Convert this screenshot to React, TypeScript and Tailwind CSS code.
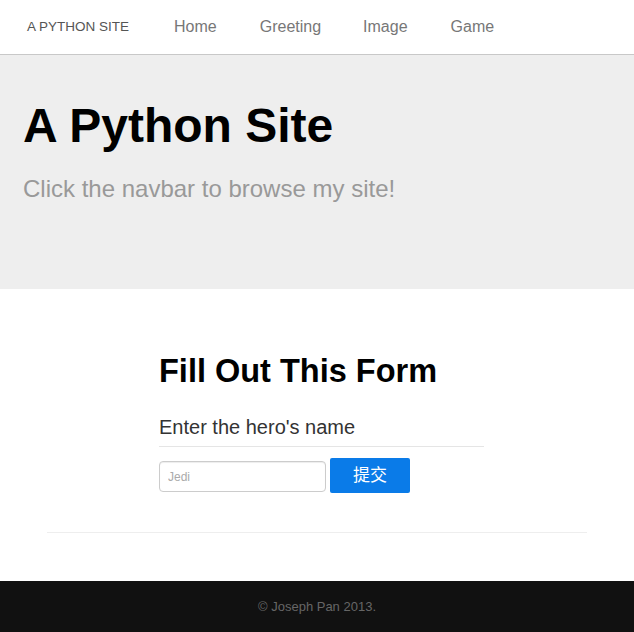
import { useState } from 'react';

const navLinks = [
  { label: 'Home', gap: 'ml-[45px]' },
  { label: 'Greeting', gap: 'ml-[43px]' },
  { label: 'Image', gap: 'ml-[42px]' },
  { label: 'Game', gap: 'ml-[43px]' },
];

export default function App() {
  const [name, setName] = useState('');

  return (
    <div className="min-h-[632px] bg-white font-['Liberation_Sans','Noto_Sans_CJK_SC',sans-serif]">
      {/* Navbar */}
      <nav className="h-[55px] border-b border-[#c8c8c8] flex items-center">
        <a className="ml-[27px] text-[13.5px] text-[#555]">A PYTHON SITE</a>
        <ul className="flex items-center">
          {navLinks.map((link) => (
            <li key={link.label} className={`${link.gap} text-[16px] text-[#777]`}>
              {link.label}
            </li>
          ))}
        </ul>
      </nav>

      {/* Hero */}
      <header className="h-[234px] bg-[#eeeeee] pl-[23px] pt-[44px]">
        <h1 className="text-[48px] leading-[53px] font-bold text-black">A Python Site</h1>
        <p className="mt-[19px] text-[24px] leading-[36px] text-[#999]">
          Click the navbar to browse my site!
        </p>
      </header>

      {/* Form */}
      <main className="pt-[65px] pb-[48px]">
        <div className="ml-[159px] w-[325px]">
          <h2 className="text-[32.5px] leading-[35px] font-bold text-black">Fill Out This Form</h2>
          <form onSubmit={(e) => e.preventDefault()}>
            <div className="mt-[23px] pb-[4px] border-b border-[#e5e5e5] text-[20px] leading-[30px] text-[#333]">
              Enter the hero's name
            </div>
            <div className="mt-[11px] flex items-center">
              <input
                value={name}
                onChange={(e) => setName(e.target.value)}
                placeholder="Jedi"
                className="mt-[2px] w-[167px] h-[31px] border border-[#ccc] rounded-[4px] px-[8px] text-[12px] text-[#555] placeholder:text-[#aaa] shadow-[inset_0_1px_1px_rgba(0,0,0,0.075)] outline-none"
              />
              <button
                type="submit"
                className="ml-[4px] w-[80px] h-[35px] bg-[#0a7be8] rounded-[2px] text-white text-[17px]"
              >
                提交
              </button>
            </div>
          </form>
        </div>
        <hr className="mt-[39px] mx-auto w-[540px] border-0 border-t border-[#eee]" />
      </main>

      {/* Footer */}
      <footer className="h-[51px] bg-[#111] flex items-center justify-center">
        <p className="text-[13px] text-[#666]">© Joseph Pan 2013.</p>
      </footer>
    </div>
  );
}
